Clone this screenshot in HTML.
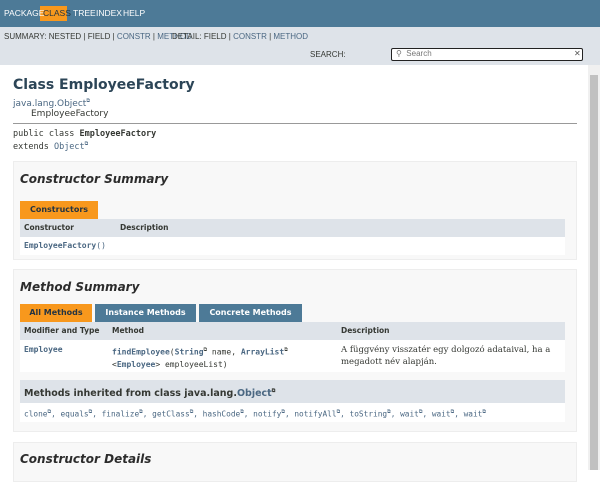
<!DOCTYPE html><html><head><style>
*{margin:0;padding:0;box-sizing:border-box}
body{width:600px;height:470px;overflow:hidden;background:#fff;font-family:"DejaVu Sans","Liberation Sans",sans-serif;font-size:8px;color:#353833;position:relative}
.a{position:absolute;white-space:nowrap}
.m{font-family:"DejaVu Sans Mono","Liberation Mono",monospace}
.l{color:#4a6782}
.b{font-weight:bold}
.box{position:absolute;left:13px;width:564px;background:#f8f8f8;border:1px solid #ededed}
.h2{font-size:12px;font-weight:bold;font-style:italic;color:#2c2c2c}
.tab{position:absolute;height:18px;line-height:18px;font-size:8px;font-weight:bold;text-align:center;color:#fff;background:#4d7a97}
.tab.on{background:#f8981d;color:#253441}
.thd{position:absolute;left:20px;width:545px;background:#dee3e9;font-weight:bold;font-size:7.5px}
.row{position:absolute;left:20px;width:545px;background:#fff}
sup{font-size:5px;vertical-align:super}
.n{position:absolute;top:8px;color:#fff;font-family:"Liberation Sans",sans-serif;font-size:8.5px}
.s{font-family:"Liberation Sans",sans-serif;font-size:8px}
</style></head><body>
<div class="a" style="left:0;top:0;width:600px;height:27px;background:#4d7a97"></div>
<div class="a" style="left:40px;top:6px;width:27px;height:15px;background:#f8981d"></div>
<span class="n" style="left:4px">PACKAGE</span>
<span class="n" style="left:43px;color:#253441">CLASS</span>
<span class="n" style="left:73px">TREE</span>
<span class="n" style="left:96px">INDEX</span>
<span class="n" style="left:123px">HELP</span>
<div class="a" style="left:0;top:27px;width:600px;height:38px;background:#dee3e9"></div>
<div class="a s" style="left:4px;top:32px">SUMMARY: NESTED | FIELD | <span class="l">CONSTR</span> | <span class="l">METHOD</span></div>
<div class="a s" style="left:172px;top:32px">DETAIL: FIELD | <span class="l">CONSTR</span> | <span class="l">METHOD</span></div>
<div class="a s" style="left:310px;top:50px">SEARCH:</div>
<div class="a" style="left:391px;top:48px;width:192px;height:13px;background:#fff;border:1px solid #222;border-radius:2px"></div>
<div class="a s" style="left:396px;top:49px;color:#777">⚲ &nbsp;Search</div>
<div class="a" style="left:574px;top:49px;font-size:8px;color:#555">✕</div>
<div class="a" style="left:588px;top:65px;width:12px;height:405px;background:#f0f0f0"></div>
<div class="a" style="left:590px;top:75px;width:8px;height:395px;background:#c1c1c1"></div>
<div class="a" style="left:13px;top:77px;font-size:14px;font-weight:bold;color:#2c4557">Class EmployeeFactory</div>
<div class="a l" style="left:13px;top:98px;font-size:9px">java.lang.Object<sup>⧉</sup></div>
<div class="a" style="left:31px;top:109px;font-size:9px">EmployeeFactory</div>
<div class="a" style="left:13px;top:123px;width:564px;height:1px;background:#999"></div>
<div class="a m" style="left:13px;top:129px;font-size:8.5px">public class <b>EmployeeFactory</b></div>
<div class="a m" style="left:13px;top:141px;font-size:8.5px">extends <span class="l">Object<sup>⧉</sup></span></div>

<div class="box" style="top:161px;height:99px"></div>
<div class="a h2" style="left:20px;top:172px">Constructor Summary</div>
<div class="tab on" style="left:20px;top:201px;width:78px">Constructors</div>
<div class="thd" style="top:219px;height:18px;line-height:18px"><span class="a" style="left:4px">Constructor</span><span class="a" style="left:100px">Description</span></div>
<div class="row" style="top:237px;height:18px;line-height:18px"><span class="a m l b" style="left:4px">EmployeeFactory<span style="font-weight:normal">()</span></span></div>

<div class="box" style="top:269px;height:163px"></div>
<div class="a h2" style="left:20px;top:280px">Method Summary</div>
<div class="tab on" style="left:20px;top:304px;width:72px">All Methods</div>
<div class="tab" style="left:95px;top:304px;width:101px">Instance Methods</div>
<div class="tab" style="left:199px;top:304px;width:103px">Concrete Methods</div>
<div class="thd" style="top:322px;height:18px;line-height:18px"><span class="a" style="left:4px">Modifier and Type</span><span class="a" style="left:92px">Method</span><span class="a" style="left:321px">Description</span></div>
<div class="row" style="top:340px;height:32px"><span class="a m l b" style="left:4px;top:5px">Employee</span>
<span class="a m" style="left:92px;top:4px;line-height:12px"><b class="l">findEmployee</b>(<b class="l">String</b><sup>⧉</sup> name, <b class="l">ArrayList</b><sup>⧉</sup><br>&lt;<b class="l">Employee</b>&gt; employeeList)</span>
<span class="a" style="left:321px;top:4px;line-height:12px;font-family:'DejaVu Serif','Liberation Serif',serif;font-size:8.5px">A függvény visszatér egy dolgozó adataival, ha a<br>megadott név alapján.</span></div>
<div class="thd" style="top:380px;height:23px;line-height:23px;font-size:9.5px"><span class="a" style="left:4px">Methods inherited from class java.lang.<span class="l">Object</span><sup>⧉</sup></span></div>
<div class="row" style="top:403px;height:19px;line-height:19px"><span class="a m l" style="left:4px;font-size:7.8px">clone<sup>⧉</sup>, equals<sup>⧉</sup>, finalize<sup>⧉</sup>, getClass<sup>⧉</sup>, hashCode<sup>⧉</sup>, notify<sup>⧉</sup>, notifyAll<sup>⧉</sup>, toString<sup>⧉</sup>, wait<sup>⧉</sup>, wait<sup>⧉</sup>, wait<sup>⧉</sup></span></div>

<div class="box" style="top:442px;height:40px"></div>
<div class="a h2" style="left:20px;top:452px">Constructor Details</div>
</body></html>
